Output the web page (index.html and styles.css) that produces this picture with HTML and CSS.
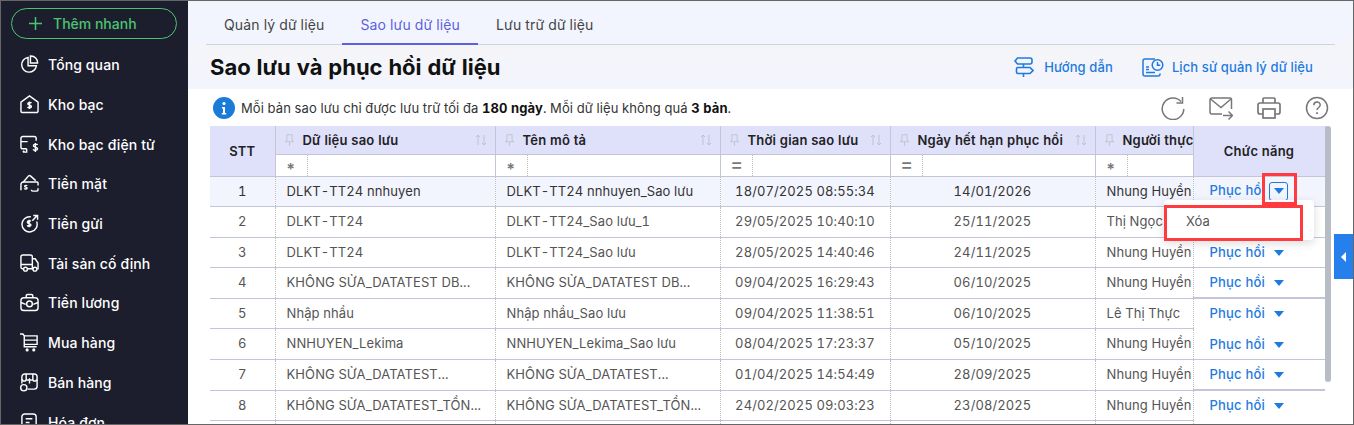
FILE: index.html
```html
<!DOCTYPE html>
<html lang="vi">
<head>
    <meta charset="UTF-8">
    <title>Sao lưu và phục hồi dữ liệu</title>
    <link rel="stylesheet" href="styles.css">
</head>
<body>
<div class="app">

    <!-- Sidebar -->
    <aside class="sidebar">
        <button class="add-btn" type="button">
            <svg width="13" height="13" viewBox="0 0 13 13" fill="none" stroke="currentColor" stroke-width="1.500"><path d="M6.500 0v13M0 6.500h13"/></svg>
            <span>Thêm nhanh</span>
        </button>
        <nav class="nav">
            <a class="nav-item"><svg class="nav-icon" viewBox="0 0 20 20"><path d="M8.500 2.500a7.800 7.800 0 1 0 8.800 8.800H8.500z"/><path d="M11 1a7 7 0 0 1 7.500 7.500H11z"/></svg>Tổng quan</a>
            <a class="nav-item"><svg class="nav-icon" viewBox="0 0 20 20"><path d="M1 7.500 10 1l9 6.500v9a2 2 0 0 1-2 2H3a2 2 0 0 1-2-2z"/><path d="M12 8.500c-.5-1-3.800-1-3.800.8 0 1.800 3.800 1 3.800 2.800 0 1.700-3.400 1.600-4 .4M10 6.800v8"/></svg>Kho bạc</a>
            <a class="nav-item"><svg class="nav-icon" viewBox="0 0 20 20"><path d="M7 14.500H3a2 2 0 0 1-2-2V3.500a2 2 0 0 1 2-2h12a2 2 0 0 1 2 2V6"/><path d="M1 7h7M3 18h4v-3.500M3 18l1.500-1.500"/><path d="M18.500 10.500c-.6-1.300-4.400-1.300-4.400.8s4.400 1.200 4.400 3.300c0 2-4 1.900-4.700.5M16.200 8.500V18"/></svg>Kho bạc điện tử</a>
            <a class="nav-item"><svg class="nav-icon" viewBox="0 0 20 20"><path d="M3.500 8.500 9 2c.6-.6 1.400-.6 2 0l5.500 5"/><path d="M1 17V11a2.500 2.500 0 0 1 2.500-2.500H18a1 1 0 0 1 1 1V12M13 18h4a2 2 0 0 0 2-2v-1M13 18a1.500 1.500 0 0 1-1-1.500"/><path d="M7.500 12.500c-.4-.8-2.600-.8-2.600.4 0 1.200 2.600.6 2.600 1.900 0 1.200-2.500 1.100-2.900.3"/></svg>Tiền mặt</a>
            <a class="nav-item"><svg class="nav-icon" viewBox="0 0 20 20"><path d="M17.500 8a8 8 0 1 1-6-5"/><path d="M13 7l5-5.500M14 1.500h4.500V6"/><path d="M11.500 7.800c-.5-1-3.800-1-3.800.9 0 1.800 3.800 1 3.800 2.800 0 1.700-3.300 1.600-4 .4M9.600 6v8"/></svg>Tiền gửi</a>
            <a class="nav-item"><svg class="nav-icon" viewBox="0 0 20 20"><path d="M3.500 15.500H2.500A1.500 1.500 0 0 1 1 14V3a2 2 0 0 1 2-2h8a2 2 0 0 1 2 2v12.500H8"/><path d="M1 11h12M13 5h3l3 4.500v6h-1M13 15.500h.500"/><circle cx="5.800" cy="16" r="2"/><circle cx="15.700" cy="16" r="2"/></svg>Tài sản cố định</a>
            <a class="nav-item"><svg class="nav-icon" viewBox="0 0 20 20"><path d="M6.500 5V3a1.500 1.500 0 0 1 1.500-1.500h4A1.500 1.500 0 0 1 13.500 3v2"/><rect x="1" y="5" width="18" height="13.500" rx="3"/><path d="M1 10l5 2M19 10l-5 2"/><circle cx="10" cy="11.500" r="3"/></svg>Tiền lương</a>
            <a class="nav-item"><svg class="nav-icon" viewBox="0 0 20 20"><path d="M0 1h3l1.500 2v11.500h13"/><path d="M4.500 3H18v9H4.500M4.500 7.500H18"/><circle cx="7.500" cy="17.800" r=".9"/><circle cx="14.500" cy="17.800" r=".9"/></svg>Mua hàng</a>
            <a class="nav-item"><svg class="nav-icon" viewBox="0 0 20 20"><path d="M2 11V4a3 3 0 0 1 3-3h10a3 3 0 0 1 3 3v10a3 3 0 0 1-3 3H8"/><path d="M6.500 1v5.500a2 2 0 0 1-4 0M6.500 6.500a2 2 0 0 0 3.500 0 2 2 0 0 0 3.500 0 2 2 0 0 0 4 0M13.500 1v5.500M10 11v-3"/><circle cx="4" cy="15.500" r="3.300"/></svg>Bán hàng</a>
            <a class="nav-item"><svg class="nav-icon" viewBox="0 0 20 20"><path d="M2 4a3 3 0 0 1 3-3h9a3 3 0 0 1 3 3v15H2z"/><path d="M6 6h7M6 10h4"/></svg>Hóa đơn</a>
        </nav>
    </aside>

    <main class="main">
        <!-- Tabs + title -->
        <div class="top">
            <div class="tabs">
                <a class="tab">Quản lý dữ liệu</a>
                <a class="tab active">Sao lưu dữ liệu</a>
                <a class="tab">Lưu trữ dữ liệu</a>
            </div>
            <div class="title-row">
                <h1>Sao lưu và phục hồi dữ liệu</h1>
                <div class="links">
                    <a class="link guide">
                        <svg width="20" height="20" viewBox="0 0 20 20" fill="none" stroke="currentColor" stroke-width="1.600"><path d="M3.500 1H16a2 2 0 0 1 2 2v2a2 2 0 0 1-2 2H3.500L1 4zM4 10.500h12l3 3-3 3H4a1.500 1.500 0 0 1-1.500-1.500v-3A1.500 1.500 0 0 1 4 10.500zM9.500 7v3.500M9.500 16.500V20"/></svg>
                        Hướng dẫn
                    </a>
                    <a class="link">
                        <svg width="22" height="19" viewBox="0 0 22 19" fill="none" stroke="currentColor" stroke-width="1.500"><path d="M18 15.500V16a2 2 0 0 1-2 2H3a2 2 0 0 1-2-2V3a2 2 0 0 1 2-2h10"/><circle cx="15.500" cy="7" r="5.300"/><path d="M15.500 4v3.200h2.800M4 9h3M4 11.500h3M4 14.500h9"/></svg>
                        Lịch sử quản lý dữ liệu
                    </a>
                </div>
            </div>
        </div>

        <!-- Notice + tools -->
        <div class="info-row">
            <svg class="info-icon" width="22" height="22" viewBox="0 0 22 22"><circle cx="11" cy="11" r="11" fill="#1a7bd8"/><circle cx="11" cy="6.500" r="1.600" fill="#fff"/><path d="M9 10h3v6h1.200v1.500H8.800V16H10v-4.500H9z" fill="#fff"/></svg>
            <p>Mỗi bản sao lưu chỉ được lưu trữ tối đa <b>180 ngày</b>. Mỗi dữ liệu không quá <b>3 bản</b>.</p>
            <div class="tools">
                <svg width="24" height="24" viewBox="0 0 24 24" fill="none" stroke="#777" stroke-width="1.500"><path d="M20 5.500A10.800 10.800 0 1 0 22.800 13"/><path d="M21.500 1v6h-6"/></svg>
                <svg width="24" height="24" viewBox="0 0 24 24" fill="none" stroke="#777" stroke-width="1.500"><path d="M13 18H3a2 2 0 0 1-2-2V4a2 2 0 0 1 2-2h18a1.500 1.500 0 0 1 1.500 1.500V13"/><path d="M1.500 3 12 11.500 22 3M14 19.500h9M19.500 15.500l4 4-4 4"/></svg>
                <svg width="24" height="24" viewBox="0 0 24 24" fill="none" stroke="#777" stroke-width="1.700"><path d="M6 7V3a1 1 0 0 1 1-1h10a1 1 0 0 1 1 1v4"/><path d="M6 18H3a2 2 0 0 1-2-2V9a2 2 0 0 1 2-2h18a2 2 0 0 1 2 2v7a2 2 0 0 1-2 2h-3"/><rect x="6" y="13" width="12" height="9"/></svg>
                <svg width="24" height="24" viewBox="0 0 24 24" fill="none" stroke="#777" stroke-width="1.500"><circle cx="12" cy="12" r="10.500"/><path d="M8.800 9.300c0-4.300 6.400-4.300 6.400-.3 0 2.500-3.200 2.500-3.200 5"/><path d="M12 16.200v1.800" stroke-width="1.800"/></svg>
            </div>
        </div>

        <!-- Table -->
        <div class="table-wrap">
            <table class="data">
                <colgroup>
                    <col class="c-stt"><col class="c-name"><col class="c-desc"><col class="c-time"><col class="c-exp"><col class="c-user"><col class="c-act">
                </colgroup>
                <thead>
                    <tr class="head-row">
                        <th rowspan="2" class="stt-head">STT</th>
                        <th><div class="th-in"><svg class="pin" viewBox="0 0 10 14"><path d="M2 1h6v6l1.500 2h-9L2 7zM5 9v5"/></svg><span>Dữ liệu sao lưu</span><svg class="sort" viewBox="0 0 12 12"><path d="M3 11V1M1 3l2-2 2 2M9 1v10M7 9l2 2 2-2"/></svg></div></th>
                        <th><div class="th-in"><svg class="pin" viewBox="0 0 10 14"><path d="M2 1h6v6l1.500 2h-9L2 7zM5 9v5"/></svg><span>Tên mô tả</span><svg class="sort" viewBox="0 0 12 12"><path d="M3 11V1M1 3l2-2 2 2M9 1v10M7 9l2 2 2-2"/></svg></div></th>
                        <th><div class="th-in"><svg class="pin" viewBox="0 0 10 14"><path d="M2 1h6v6l1.500 2h-9L2 7zM5 9v5"/></svg><span>Thời gian sao lưu</span><svg class="sort" viewBox="0 0 12 12"><path d="M3 11V1M1 3l2-2 2 2M9 1v10M7 9l2 2 2-2"/></svg></div></th>
                        <th><div class="th-in"><svg class="pin" viewBox="0 0 10 14"><path d="M2 1h6v6l1.500 2h-9L2 7zM5 9v5"/></svg><span>Ngày hết hạn phục hồi</span><svg class="sort" viewBox="0 0 12 12"><path d="M3 11V1M1 3l2-2 2 2M9 1v10M7 9l2 2 2-2"/></svg></div></th>
                        <th><div class="th-in"><svg class="pin" viewBox="0 0 10 14"><path d="M2 1h6v6l1.500 2h-9L2 7zM5 9v5"/></svg><span>Người thực hiện</span></div></th>
                        <th rowspan="2" class="act-head">Chức năng</th>
                    </tr>
                    <tr class="filter-row">
                        <td><div class="filter"><span class="op star">*</span></div></td>
                        <td><div class="filter"><span class="op star">*</span></div></td>
                        <td><div class="filter"><span class="op">=</span></div></td>
                        <td><div class="filter"><span class="op">=</span></div></td>
                        <td><div class="filter"><span class="op star">*</span></div></td>
                    </tr>
                </thead>
                <tbody>
                    <tr class="selected">
                        <td class="num">1</td><td>DLKT-TT24 nnhuyen</td><td>DLKT-TT24 nnhuyen_Sao lưu</td><td class="num">18/07/2025 08:55:34</td><td class="num">14/01/2026</td><td>Nhung Huyền</td>
                        <td class="act"><a class="restore">Phục hồi</a><span class="caret-box"><i class="caret"></i></span></td>
                    </tr>
                    <tr class="tall">
                        <td class="num">2</td><td>DLKT-TT24</td><td>DLKT-TT24_Sao lưu_1</td><td class="num">29/05/2025 10:40:10</td><td class="num">25/11/2025</td><td>Thị Ngọc</td>
                        <td class="act"></td>
                    </tr>
                    <tr>
                        <td class="num">3</td><td>DLKT-TT24</td><td>DLKT-TT24_Sao lưu</td><td class="num">28/05/2025 14:40:46</td><td class="num">24/11/2025</td><td>Nhung Huyền</td>
                        <td class="act"><a class="restore">Phục hồi</a><i class="caret"></i></td>
                    </tr>
                    <tr class="tall">
                        <td class="num">4</td><td>KHÔNG SỬA_DATATEST DB...</td><td>KHÔNG SỬA_DATATEST DB...</td><td class="num">09/04/2025 16:29:43</td><td class="num">06/10/2025</td><td>Nhung Huyền</td>
                        <td class="act thick"><a class="restore">Phục hồi</a><i class="caret"></i></td>
                    </tr>
                    <tr>
                        <td class="num">5</td><td>Nhập nhầu</td><td>Nhập nhầu_Sao lưu</td><td class="num">09/04/2025 11:38:51</td><td class="num">06/10/2025</td><td>Lê Thị Thực</td>
                        <td class="act no-line"><a class="restore">Phục hồi</a><i class="caret"></i></td>
                    </tr>
                    <tr class="tall">
                        <td class="num">6</td><td>NNHUYEN_Lekima</td><td>NNHUYEN_Lekima_Sao lưu</td><td class="num">08/04/2025 17:23:37</td><td class="num">05/10/2025</td><td>Nhung Huyền</td>
                        <td class="act"><a class="restore">Phục hồi</a><i class="caret"></i></td>
                    </tr>
                    <tr class="tall">
                        <td class="num">7</td><td>KHÔNG SỬA_DATATEST...</td><td>KHÔNG SỬA_DATATEST...</td><td class="num">01/04/2025 14:54:49</td><td class="num">28/09/2025</td><td>Nhung Huyền</td>
                        <td class="act thick"><a class="restore">Phục hồi</a><i class="caret"></i></td>
                    </tr>
                    <tr>
                        <td class="num">8</td><td>KHÔNG SỬA_DATATEST_TỒN...</td><td>KHÔNG SỬA_DATATEST_TỒN...</td><td class="num">24/02/2025 09:03:23</td><td class="num">23/08/2025</td><td>Nhung Huyền</td>
                        <td class="act no-line"><a class="restore">Phục hồi</a><i class="caret"></i></td>
                    </tr>
                    <tr>
                        <td></td><td></td><td></td><td></td><td></td><td></td><td class="act no-line"></td>
                    </tr>
                </tbody>
            </table>
            <div class="scrollbar"></div>

            <!-- Open row menu, red boxes are annotations on the screenshot -->
            <div class="menu">Xóa</div>
            <div class="mark mark-caret"></div>
            <div class="mark mark-menu"></div>
        </div>

        <button class="side-toggle" type="button"><i></i></button>
    </main>
</div>
</body>
</html>
```

FILE: styles.css
```css
* {
    box-sizing: border-box;
}
html, body {
    margin: 0;
    height: 100%;
    overflow: hidden;
}
body {
    font-family: Inter, "Noto Sans", sans-serif;
    font-size: 13px;
    color: #333;
    background: #fff;
    font-variant-numeric: tabular-nums;
}
.app {
    display: flex;
    height: 425px;
    border: 1px solid #666;
    overflow: hidden;
}

/* sidebar */
.sidebar {
    width: 187px;
    flex: none;
    background: #1c1e2e;
    padding: 7px 10px 0;
    overflow: hidden;
}
.add-btn {
    display: flex;
    align-items: center;
    gap: 11px;
    width: 166px;
    height: 31px;
    padding: 0 0 0 17px;
    border: 1px solid #4cc46f;
    border-radius: 16px;
    background: none;
    color: #4cc46f;
    font: 500 14px Inter, sans-serif;
}
.nav {
    margin-top: 6px;
}
.nav-item {
    display: flex;
    align-items: center;
    gap: 9px;
    height: 39.7px;
    padding-left: 9px;
    color: #fff;
    font-size: 14px;
    font-weight: 500;
    letter-spacing: .1px;
    white-space: nowrap;
}
.nav-icon {
    width: 19px;
    height: 19px;
    flex: none;
    fill: none;
    stroke: #fff;
    stroke-width: 1.5;
}

/* main column */
.main {
    position: relative;
    flex: 1;
    min-width: 0;
}
.top {
    height: 88px;
    padding-left: 18px;
    padding-right: 18px;
    background: linear-gradient(180deg, #f3f5fe 44px, #f5f5f8 44px, #f3f5fd 88px);
}
.tabs {
    display: flex;
    height: 44px;
    border-bottom: 1px solid #cfd2e4;
}
.tab {
    display: flex;
    align-items: center;
    padding: 5px 18px 0;
    font-size: 14px;
    letter-spacing: .15px;
    color: #444;
    margin-bottom: -1px;
    border-bottom: 2px solid transparent;
}
.tab.active {
    color: #5b5fe0;
    border-bottom-color: #5b5fe0;
}
.title-row {
    display: flex;
    align-items: center;
    justify-content: space-between;
    height: 44px;
    padding-left: 4px;
}
h1 {
    margin: 0;
    font-size: 22px;
    font-weight: 700;
    color: #111;
}
.links {
    display: flex;
    gap: 29px;
    padding-right: 22px;
}
.link {
    display: flex;
    align-items: center;
    gap: 8px;
    color: #1f7ae0;
    font-weight: 500;
    letter-spacing: .1px;
}
.link.guide {
    gap: 10px;
}

.info-row {
    display: flex;
    align-items: center;
    height: 37px;
    padding: 0 24px 0 25px;
}
.info-icon {
    flex: none;
    margin-right: 6px;
}
.info-row p {
    margin: 0;
    color: #333;
    letter-spacing: .1px;
}
.info-row b {
    color: #111;
}
.tools {
    display: flex;
    gap: 24px;
    margin-left: auto;
}

/* table */
.table-wrap {
    position: relative;
    width: 1122px;
    margin-left: 22px;
}
.data {
    width: 1115px;
    table-layout: fixed;
    border-collapse: collapse;
}
.c-stt { width: 65px; }
.c-name { width: 220px; }
.c-desc { width: 225px; }
.c-time { width: 170px; }
.c-exp { width: 205px; }
.c-user { width: 98px; }
.c-act { width: 132px; }

.data th {
    background: #dfe0fa;
    color: #222;
    font-weight: 600;
    letter-spacing: .2px;
    border: 1px solid #c4c6d8;
    border-top: 0;
    padding: 0;
    overflow: hidden;
    white-space: nowrap;
}
.stt-head {
    border-left: 0 !important;
}
.head-row {
    height: 28px;
}
.filter-row {
    height: 22px;
}
.filter-row td {
    padding: 0;
    height: 22px;
    border: 1px solid #c4c6d8;
}
.th-in {
    display: flex;
    align-items: center;
    height: 27px;
    padding: 0 8px 0 9px;
}
.th-in span {
    flex: 1;
    text-align: left;
    padding-left: 9px;
}
.pin {
    width: 9px;
    height: 12px;
    flex: none;
    fill: none;
    stroke: #c4c5d2;
    stroke-width: 1.2;
}
.sort {
    width: 12px;
    height: 12px;
    flex: none;
    fill: none;
    stroke: #bfc1d0;
    stroke-width: 1;
}
.filter {
    display: flex;
    height: 21px;
}
.op {
    width: 32px;
    border-right: 1px dotted #bbb;
    padding-left: 10px;
    color: #777;
    font-size: 19px;
    font-weight: 500;
    line-height: 20px;
}
.op.star {
    font-size: 16px;
    font-weight: 600;
    line-height: 28px;
}
.data tbody tr {
    height: 30px;
}
.data tbody tr.tall {
    height: 31px;
}
.data tbody td {
    padding: 0 0 1px 11px;
    border-bottom: 1px solid #c4c6d8;
    border-left: 1px dotted #bbb;
    color: #555;
    letter-spacing: .1px;
    white-space: nowrap;
    overflow: hidden;
}
.data tbody td:first-child {
    border-left: 0;
}
.data tbody td.num {
    padding: 0 0 1px;
    text-align: center;
}
.selected {
    background: #f3f5fe;
}
.data .selected td {
    color: #333;
}
.data tbody td.act {
    position: relative;
    padding: 0 0 0 16px;
    background: #fff;
}
.data .selected td.act {
    background: #f3f5fe;
}
.data tbody td.act.thick {
    border-bottom: 2px solid #c4c6d8;
}
.data tbody td.act.no-line {
    border-bottom-color: transparent;
}
.restore {
    color: #1f7ae0;
    font-weight: 500;
    letter-spacing: .2px;
}
.caret {
    display: inline-block;
    margin-left: 9px;
    border-left: 5px solid transparent;
    border-right: 5px solid transparent;
    border-top: 6px solid #1f7ae0;
    vertical-align: 1px;
}
.caret-box {
    display: inline-flex;
    align-items: center;
    justify-content: center;
    width: 19px;
    height: 19px;
    margin-left: 4px;
    border: 1px solid #1f7ae0;
    border-radius: 3px;
    vertical-align: middle;
}
.caret-box .caret {
    margin: 0;
}
.scrollbar {
    position: absolute;
    left: 1115px;
    top: 0;
    width: 6px;
    height: 256px;
    border-radius: 3px;
    background: #b8bcc4;
}
.menu {
    position: absolute;
    left: 954px;
    top: 74px;
    width: 150px;
    height: 40px;
    padding: 13px 0 0 22px;
    background: #fff;
    border-radius: 4px;
    box-shadow: 0 3px 10px rgba(0, 0, 0, .15);
    color: #555;
}
.mark {
    position: absolute;
    border: 3px solid #ff3b3f;
}
.mark-caret {
    left: 1052px;
    top: 47px;
    width: 35px;
    height: 32px;
}
.mark-menu {
    left: 954px;
    top: 79px;
    width: 139px;
    height: 36px;
}
.side-toggle {
    position: absolute;
    right: 0;
    top: 233px;
    width: 19px;
    height: 45px;
    border: 0;
    padding: 0;
    background: #2680eb;
    display: flex;
    align-items: center;
    justify-content: center;
}
.side-toggle i {
    border-top: 5px solid transparent;
    border-bottom: 5px solid transparent;
    border-right: 5px solid #fff;
}
```
